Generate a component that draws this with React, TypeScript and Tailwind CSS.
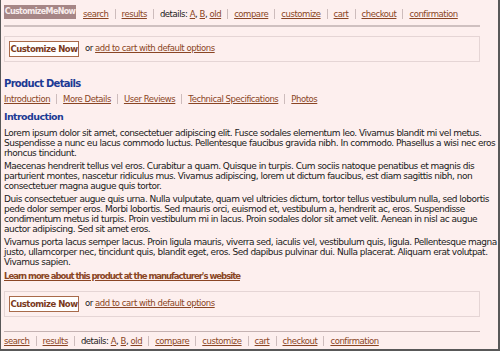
import React from "react";

const LINK = "text-[#8a4524] underline underline-offset-[1px] decoration-[#8a4524]";

function Sep() {
  return <span className="mx-[6px] inline-block h-[10px] w-px bg-[#cdbcbc]" />;
}

function Nav() {
  return (
    <div className="flex items-center whitespace-nowrap">
      <a className={LINK}>search</a>
      <Sep />
      <a className={LINK}>results</a>
      <Sep />
      <span className="text-[#1a1a1a]">
        details: <a className={LINK}>A</a>, <a className={LINK}>B</a>, <a className={LINK}>old</a>
      </span>
      <Sep />
      <a className={LINK}>compare</a>
      <Sep />
      <a className={LINK}>customize</a>
      <Sep />
      <a className={LINK}>cart</a>
      <Sep />
      <a className={LINK}>checkout</a>
      <Sep />
      <a className={LINK}>confirmation</a>
    </div>
  );
}

function BuyBox() {
  return (
    <div className="flex h-[26px] w-[476px] items-center border border-[#e5d5d5] px-[4px]">
      <button className="flex h-[16px] w-[70px] items-center justify-center border border-[#a86a4a] bg-white font-bold tracking-[-0.5px] text-[#7a3a1c]">
        Customize Now
      </button>
      <span className="ml-[6px] -mt-[3px] text-[#1a1a1a]">
        or <a className={LINK}>add to cart with default options</a>
      </span>
    </div>
  );
}

function Para({ lines }: { lines: string[] }) {
  return (
    <div className="mb-[3px] text-[9px] leading-[10px] tracking-[-0.5px] text-[#1a1a1a]">
      {lines.map((l, i) => (
        <div key={i} className="whitespace-nowrap">
          {l}
        </div>
      ))}
    </div>
  );
}

export default function App() {
  return (
    <div className="h-[351px] w-[500px] overflow-hidden border-b-2 border-l border-r-2 border-[#585858] bg-[#fdefee] pl-[3px] font-['DejaVu_Sans',sans-serif] text-[8.5px] leading-[10px] tracking-[-0.45px]">
      <div className="flex items-center pt-[5px]">
        <div className="flex h-[14px] w-[72px] items-center justify-center bg-[#a68686] text-[8px] font-bold tracking-[-0.65px] text-[#f7ecec]">
          CustomizeMeNow
        </div>
        <div className="ml-[7px] pt-[3px]">
          <Nav />
        </div>
      </div>
      <div className="mt-[6px] h-[2px] w-[476px] bg-[#cfc0c0]" />
      <div className="mt-[9px]">
        <BuyBox />
      </div>

      <div className="mt-[15px] text-[10px] font-bold leading-[14px] tracking-[-0.7px] text-[#1c3a94]">
        Product Details
      </div>
      <div className="mt-[3px] flex items-center whitespace-nowrap">
        <a className={LINK}>Introduction</a>
        <Sep />
        <a className={LINK}>More Details</a>
        <Sep />
        <a className={LINK}>User Reviews</a>
        <Sep />
        <a className={LINK}>Technical Specifications</a>
        <Sep />
        <a className={LINK}>Photos</a>
      </div>
      <div className="mt-[7px] text-[9.5px] font-bold leading-[12px] tracking-[-0.6px] text-[#1c3a94]">
        Introduction
      </div>
      <div className="mt-[5px]">
        <Para
          lines={[
            "Lorem ipsum dolor sit amet, consectetuer adipiscing elit. Fusce sodales elementum leo. Vivamus blandit mi vel metus.",
            "Suspendisse a nunc eu lacus commodo luctus. Pellentesque faucibus gravida nibh. In commodo. Phasellus a wisi nec eros",
            "rhoncus tincidunt.",
          ]}
        />
        <Para
          lines={[
            "Maecenas hendrerit tellus vel eros. Curabitur a quam. Quisque in turpis. Cum sociis natoque penatibus et magnis dis",
            "parturient montes, nascetur ridiculus mus. Vivamus adipiscing, lorem ut dictum faucibus, est diam sagittis nibh, non",
            "consectetuer magna augue quis tortor.",
          ]}
        />
        <Para
          lines={[
            "Duis consectetuer augue quis urna. Nulla vulputate, quam vel ultricies dictum, tortor tellus vestibulum nulla, sed lobortis",
            "pede dolor semper eros. Morbi lobortis. Sed mauris orci, euismod et, vestibulum a, hendrerit ac, eros. Suspendisse",
            "condimentum metus id turpis. Proin vestibulum mi in lacus. Proin sodales dolor sit amet velit. Aenean in nisl ac augue",
            "auctor adipiscing. Sed sit amet eros.",
          ]}
        />
        <Para
          lines={[
            "Vivamus porta lacus semper lacus. Proin ligula mauris, viverra sed, iaculis vel, vestibulum quis, ligula. Pellentesque magna",
            "justo, ullamcorper nec, tincidunt quis, blandit eget, eros. Sed dapibus pulvinar dui. Nulla placerat. Aliquam erat volutpat.",
            "Vivamus sapien.",
          ]}
        />
      </div>
      <div className="mt-[4px]">
        <a className={LINK + " font-bold tracking-[-1px]"}>Learn more about this product at the manufacturer's website</a>
      </div>
      <div className="mt-[10px]">
        <BuyBox />
      </div>
      <div className="mt-[14px] h-px w-[476px] bg-[#c4b2b2]" />
      <div className="mt-[4px]">
        <Nav />
      </div>
    </div>
  );
}
